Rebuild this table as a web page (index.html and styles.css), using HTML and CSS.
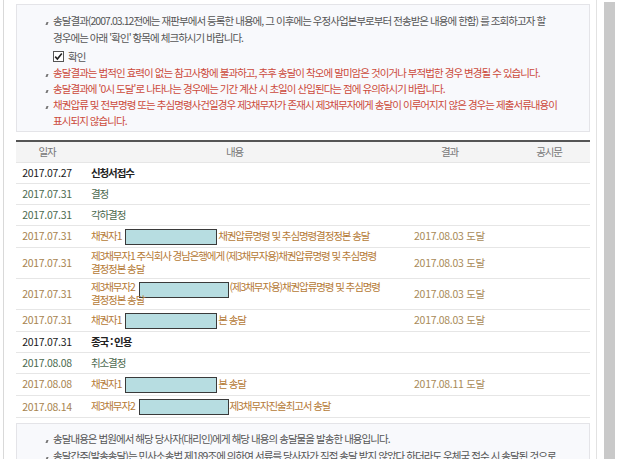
FILE: index.html
```html
<!DOCTYPE html>
<html lang="ko">
<head>
<meta charset="utf-8">
<link rel="stylesheet" href="styles.css">
</head>
<body>
<div class="screen">
  <div class="viewport">
    <div class="notice top">
      <ul class="bullets">
        <li class="gray">송달결과(2007.03.12전에는 재판부에서 등록한 내용에, 그 이후에는 우정사업본부로부터 전송받은 내용에 한함) 를 조회하고자 할 경우에는 아래 '확인' 항목에 체크하시기 바랍니다.</li>
      </ul>
      <div class="confirm">
        <span class="checkbox"><svg width="11" height="11" viewBox="0 0 11 11"><path d="M2.2 5.6 L4.4 8 L8.8 2.6" fill="none" stroke="#222" stroke-width="1.6"/></svg></span>
        <span class="confirm-label">확인</span>
      </div>
      <ul class="bullets red">
        <li>송달결과는 법적인 효력이 없는 참고사항에 불과하고, 추후 송달이 착오에 말미암은 것이거나 부적법한 경우 변경될 수 있습니다.</li>
        <li>송달결과에 '0시 도달'로 나타나는 경우에는 기간 계산 시 초일이 산입된다는 점에 유의하시기 바랍니다.</li>
        <li>채권압류 및 전부명령 또는 추심명령사건일경우 제3채무자가 존재시 제3채무자에게 송달이 이루어지지 않은 경우는 제출서류내용이 표시되지 않습니다.</li>
      </ul>
    </div>

    <table class="history">
      <colgroup>
        <col class="c-date"><col class="c-content"><col class="c-result"><col class="c-notice">
      </colgroup>
      <thead>
        <tr><th>일자</th><th>내용</th><th>결과</th><th>공시문</th></tr>
      </thead>
      <tbody>
        <tr class="black"><td class="date">2017.07.27</td><td class="txt">신청서접수</td><td></td><td></td></tr>
        <tr class="green"><td class="date">2017.07.31</td><td class="txt">결정</td><td></td><td></td></tr>
        <tr class="green"><td class="date">2017.07.31</td><td class="txt">각하결정</td><td></td><td></td></tr>
        <tr class="gold"><td class="date">2017.07.31</td><td class="txt">채권자1 <span class="mask m1"></span>채권압류명령 및 추심명령결정정본 송달</td><td class="res">2017.08.03 도달</td><td></td></tr>
        <tr class="gold tall"><td class="date">2017.07.31</td><td class="txt">제3채무자1 주식회사 경남은행에게 (제3채무자용)채권압류명령 및 추심명령 결정정본 송달</td><td class="res">2017.08.03 도달</td><td></td></tr>
        <tr class="gold tall"><td class="date">2017.07.31</td><td class="txt">제3채무자2 <span class="mask m2"></span>(제3채무자용)채권압류명령 및 추심명령 결정정본 송달</td><td class="res">2017.08.03 도달</td><td></td></tr>
        <tr class="gold"><td class="date">2017.07.31</td><td class="txt">채권자1 <span class="mask m1"></span>본 송달</td><td class="res">2017.08.03 도달</td><td></td></tr>
        <tr class="black"><td class="date">2017.07.31</td><td class="txt">종국 : 인용</td><td></td><td></td></tr>
        <tr class="green"><td class="date">2017.08.08</td><td class="txt">취소결정</td><td></td><td></td></tr>
        <tr class="gold"><td class="date">2017.08.08</td><td class="txt">채권자1 <span class="mask m1"></span>본 송달</td><td class="res">2017.08.11 도달</td><td></td></tr>
        <tr class="gold"><td class="date">2017.08.14</td><td class="txt">제3채무자2 <span class="mask m2"></span>제3채무자진술최고서 송달</td><td></td><td></td></tr>
      </tbody>
    </table>

    <div class="notice bottom">
      <ul class="bullets">
        <li class="gray">송달내용은 법원에서 해당 당사자(대리인)에게 해당 내용의 송달물을 발송한 내용입니다.</li>
        <li class="gray">송달간주(발송송달)는 민사소송법 제189조에 의하여 서류를 당사자가 직접 송달 받지 않았다 하더라도 우체국 접수 시 송달된 것으로 봅니다.</li>
      </ul>
    </div>
  </div>
  <div class="scrollbar"><div class="thumb"></div></div>
</div>
</body>
</html>
```

FILE: styles.css
```css
* { box-sizing: border-box; }
html, body { margin: 0; padding: 0; background: #fff; }
body {
  font-family: "Noto Sans CJK KR", "Noto Sans", sans-serif;
  font-size: 10.5px;
  letter-spacing: -1.1px;
  word-break: keep-all;
  color: #333;
  width: 620px;
  height: 459px;
  overflow: hidden;
}
.screen {
  display: flex;
  height: 459px;
  padding-left: 3px;
}
.viewport {
  width: 594px;
  height: 459px;
  overflow: hidden;
  border-left: 1px solid #d9d9d9;
  border-right: 1px solid #e2e2e2;
  padding: 4px 6px 0 12px;
}
.scrollbar {
  flex: 1;
  display: flex;
  padding-left: 7px;
  padding-right: 5px;
  background: #fff;
}
.thumb {
  flex: 1;
  background: #c9c9c9;
  margin-top: 2px;
}

.notice {
  background: #f8f9fc;
  border: 1px solid #e4e4e8;
}
.notice.top { padding: 7px 10px 8px 28px; height: 128px; letter-spacing: -0.95px; }
.notice.bottom { margin-top: 5px; padding: 6px 10px 0 28px; letter-spacing: -0.95px; }

.bullets { list-style: none; margin: 0; padding: 0; }
.bullets li {
  position: relative;
  padding-left: 8px;
  line-height: 17px;
}
.bullets li::before {
  content: "";
  position: absolute;
  left: 1px;
  top: 10px;
  width: 2px;
  height: 3px;
  background: #777;
  transform: skewX(-20deg);
}
.bullets li.gray { color: #555; }
.bullets.red li { color: #cc4a3b; line-height: 16px; }
.bullets.red li::before { top: 9px; }

.confirm {
  display: flex;
  align-items: center;
  gap: 4px;
  padding-left: 8px;
  margin: 4px 0 2px;
  height: 13px;
}
.checkbox {
  display: inline-flex;
  width: 11px;
  height: 11px;
  border: 1px solid #555;
  background: #fff;
  align-items: center;
  justify-content: center;
}
.checkbox svg { display: block; margin: -1px; }
.confirm-label { color: #555; }

.history {
  width: 100%;
  margin-top: 8px;
  border-collapse: collapse;
  table-layout: fixed;
  border-top: 2px solid #555;
}
.c-date { width: 62px; }
.c-content { width: 313px; }
.c-result { width: 117px; }
.c-notice { width: auto; }
.history th {
  background: #f4f4f4;
  color: #777;
  font-weight: normal;
  height: 21px;
  padding: 0;
  text-align: center;
  line-height: 13px;
  border-bottom: 1px solid #e6e6e6;
}
.history td {
  padding: 4px 0;
  line-height: 12px;
  text-align: center;
  border-bottom: 1px solid #e6e6e6;
  vertical-align: middle;
  height: 21px;
}
.history td.date, .history td.res { letter-spacing: -0.3px; }
.history td.txt { text-align: left; padding-left: 13px; padding-right: 0; }
.history tr.tall td { height: 31px; padding: 2px 0; }
.history tr.tall td.txt { padding-left: 13px; line-height: 12.5px; }

.black td { color: #1a1a1a; }
.black td.txt { font-weight: bold; color: #222; }
.green td { color: #4c6a4f; }
.gold td { color: #a8844f; }
.gold td.txt { color: #b57a36; }
.gold td.res { color: #a88a58; }

.mask {
  display: inline-block;
  height: 16px;
  vertical-align: middle;
  margin-top: -2px;
  margin-bottom: -2px;
  background: #b7dde1;
  border: 1px solid #3a3a3a;
  margin-left: 2px;
  margin-right: 1px;
}
.tall .mask { vertical-align: top; margin-top: 1px; margin-bottom: -5px; }
.mask.m1 { width: 92px; }
.mask.m2 { width: 90px; }
```
